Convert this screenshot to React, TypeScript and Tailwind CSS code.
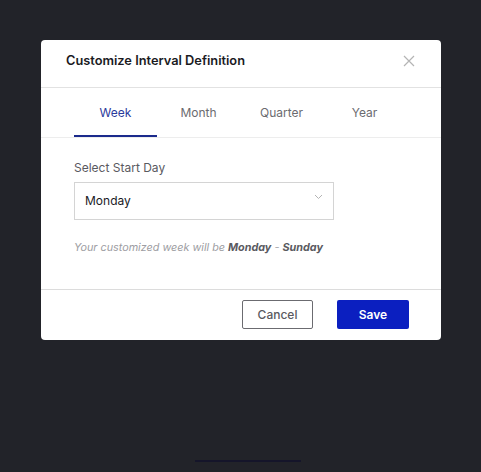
import React, { useState } from 'react';

const tabs = ['Week', 'Month', 'Quarter', 'Year'];

/**
 * Customize Interval Definition modal
 */
const App: React.FC = () => {
  const [active, setActive] = useState('Week');

  return (
    <div
      className="relative w-[481px] h-[472px] bg-[#222329] overflow-hidden pt-[40px] pl-[41px]"
      style={{ fontFamily: 'Inter, "Liberation Sans", sans-serif' }}
    >
      {/* Background leftover */}
      <div className="absolute left-[195px] top-[460px] w-[106px] h-[2px] bg-[#15152a]"></div>

      <div className="relative w-[400px] h-[300px] bg-white rounded-[4px] flex flex-col">
        {/* Header */}
        <div className="h-[48px] flex items-start justify-between pl-[25px] pr-[25px] pt-[13px] border-b border-[#e2e2e2]">
          <h2 className="text-[12.8px] leading-[16px] font-semibold text-[#1b1b1f]">Customize Interval Definition</h2>
          <button className="w-[14px] h-[14px] mt-[1px] flex items-center justify-center text-[#b4b4b4]">
            <svg className="w-[12px] h-[12px]" viewBox="0 0 12 12" fill="none" stroke="currentColor" strokeWidth={1.2}>
              <path d="M1 1l10 10M11 1L1 11" />
            </svg>
          </button>
        </div>

        {/* Tabs */}
        <div className="flex px-[33px] border-b border-[#ededed]">
          {tabs.map((tab) => (
            <button
              key={tab}
              onClick={() => setActive(tab)}
              className={`w-[83px] h-[49px] pt-[17px] text-[12px] leading-[16px] flex justify-center border-b-2 ${
                active === tab ? 'border-[#1b2a8c] text-[#2a3a9c]' : 'border-transparent text-[#6b6b70]'
              }`}
            >
              {tab}
            </button>
          ))}
        </div>

        {/* Body */}
        <div className="flex-1 px-[33px] pt-[22px]">
          <label className="block text-[12px] leading-[16px] text-[#5a5a5f] mb-[6px]">Select Start Day</label>
          <div className="w-[260px] h-[38px] border border-[#d4d4d4] flex items-center justify-between pl-[10px] pr-[10px]">
            <span className="text-[12px] text-[#1b1b1f]">Monday</span>
            <svg className="w-[9px] h-[6px] text-[#b4b4b4] mb-[8px]" viewBox="0 0 9 6" fill="none" stroke="currentColor" strokeWidth={1}>
              <path d="M1 1l3.5 3.5L8 1" />
            </svg>
          </div>
          <p className="mt-[21px] text-[10.8px] leading-[14px] italic text-[#9d9da2]">
            Your customized week will be <span className="font-bold text-[#5a5a5f]">Monday</span> -{' '}
            <span className="font-bold text-[#5a5a5f]">Sunday</span>
          </p>
        </div>

        {/* Footer */}
        <div className="h-[51px] border-t border-[#dcdcdc] flex items-start justify-end gap-[24px] pt-[10px] pr-[32px]">
          <button className="w-[71px] h-[29px] border border-[#6b6b70] rounded-[2px] text-[12px] font-medium text-[#5a5a5f]">
            Cancel
          </button>
          <button className="w-[72px] h-[29px] bg-[#0b1fc0] rounded-[2px] text-[12px] font-semibold text-white">
            Save
          </button>
        </div>
      </div>
    </div>
  );
};

export default App;
